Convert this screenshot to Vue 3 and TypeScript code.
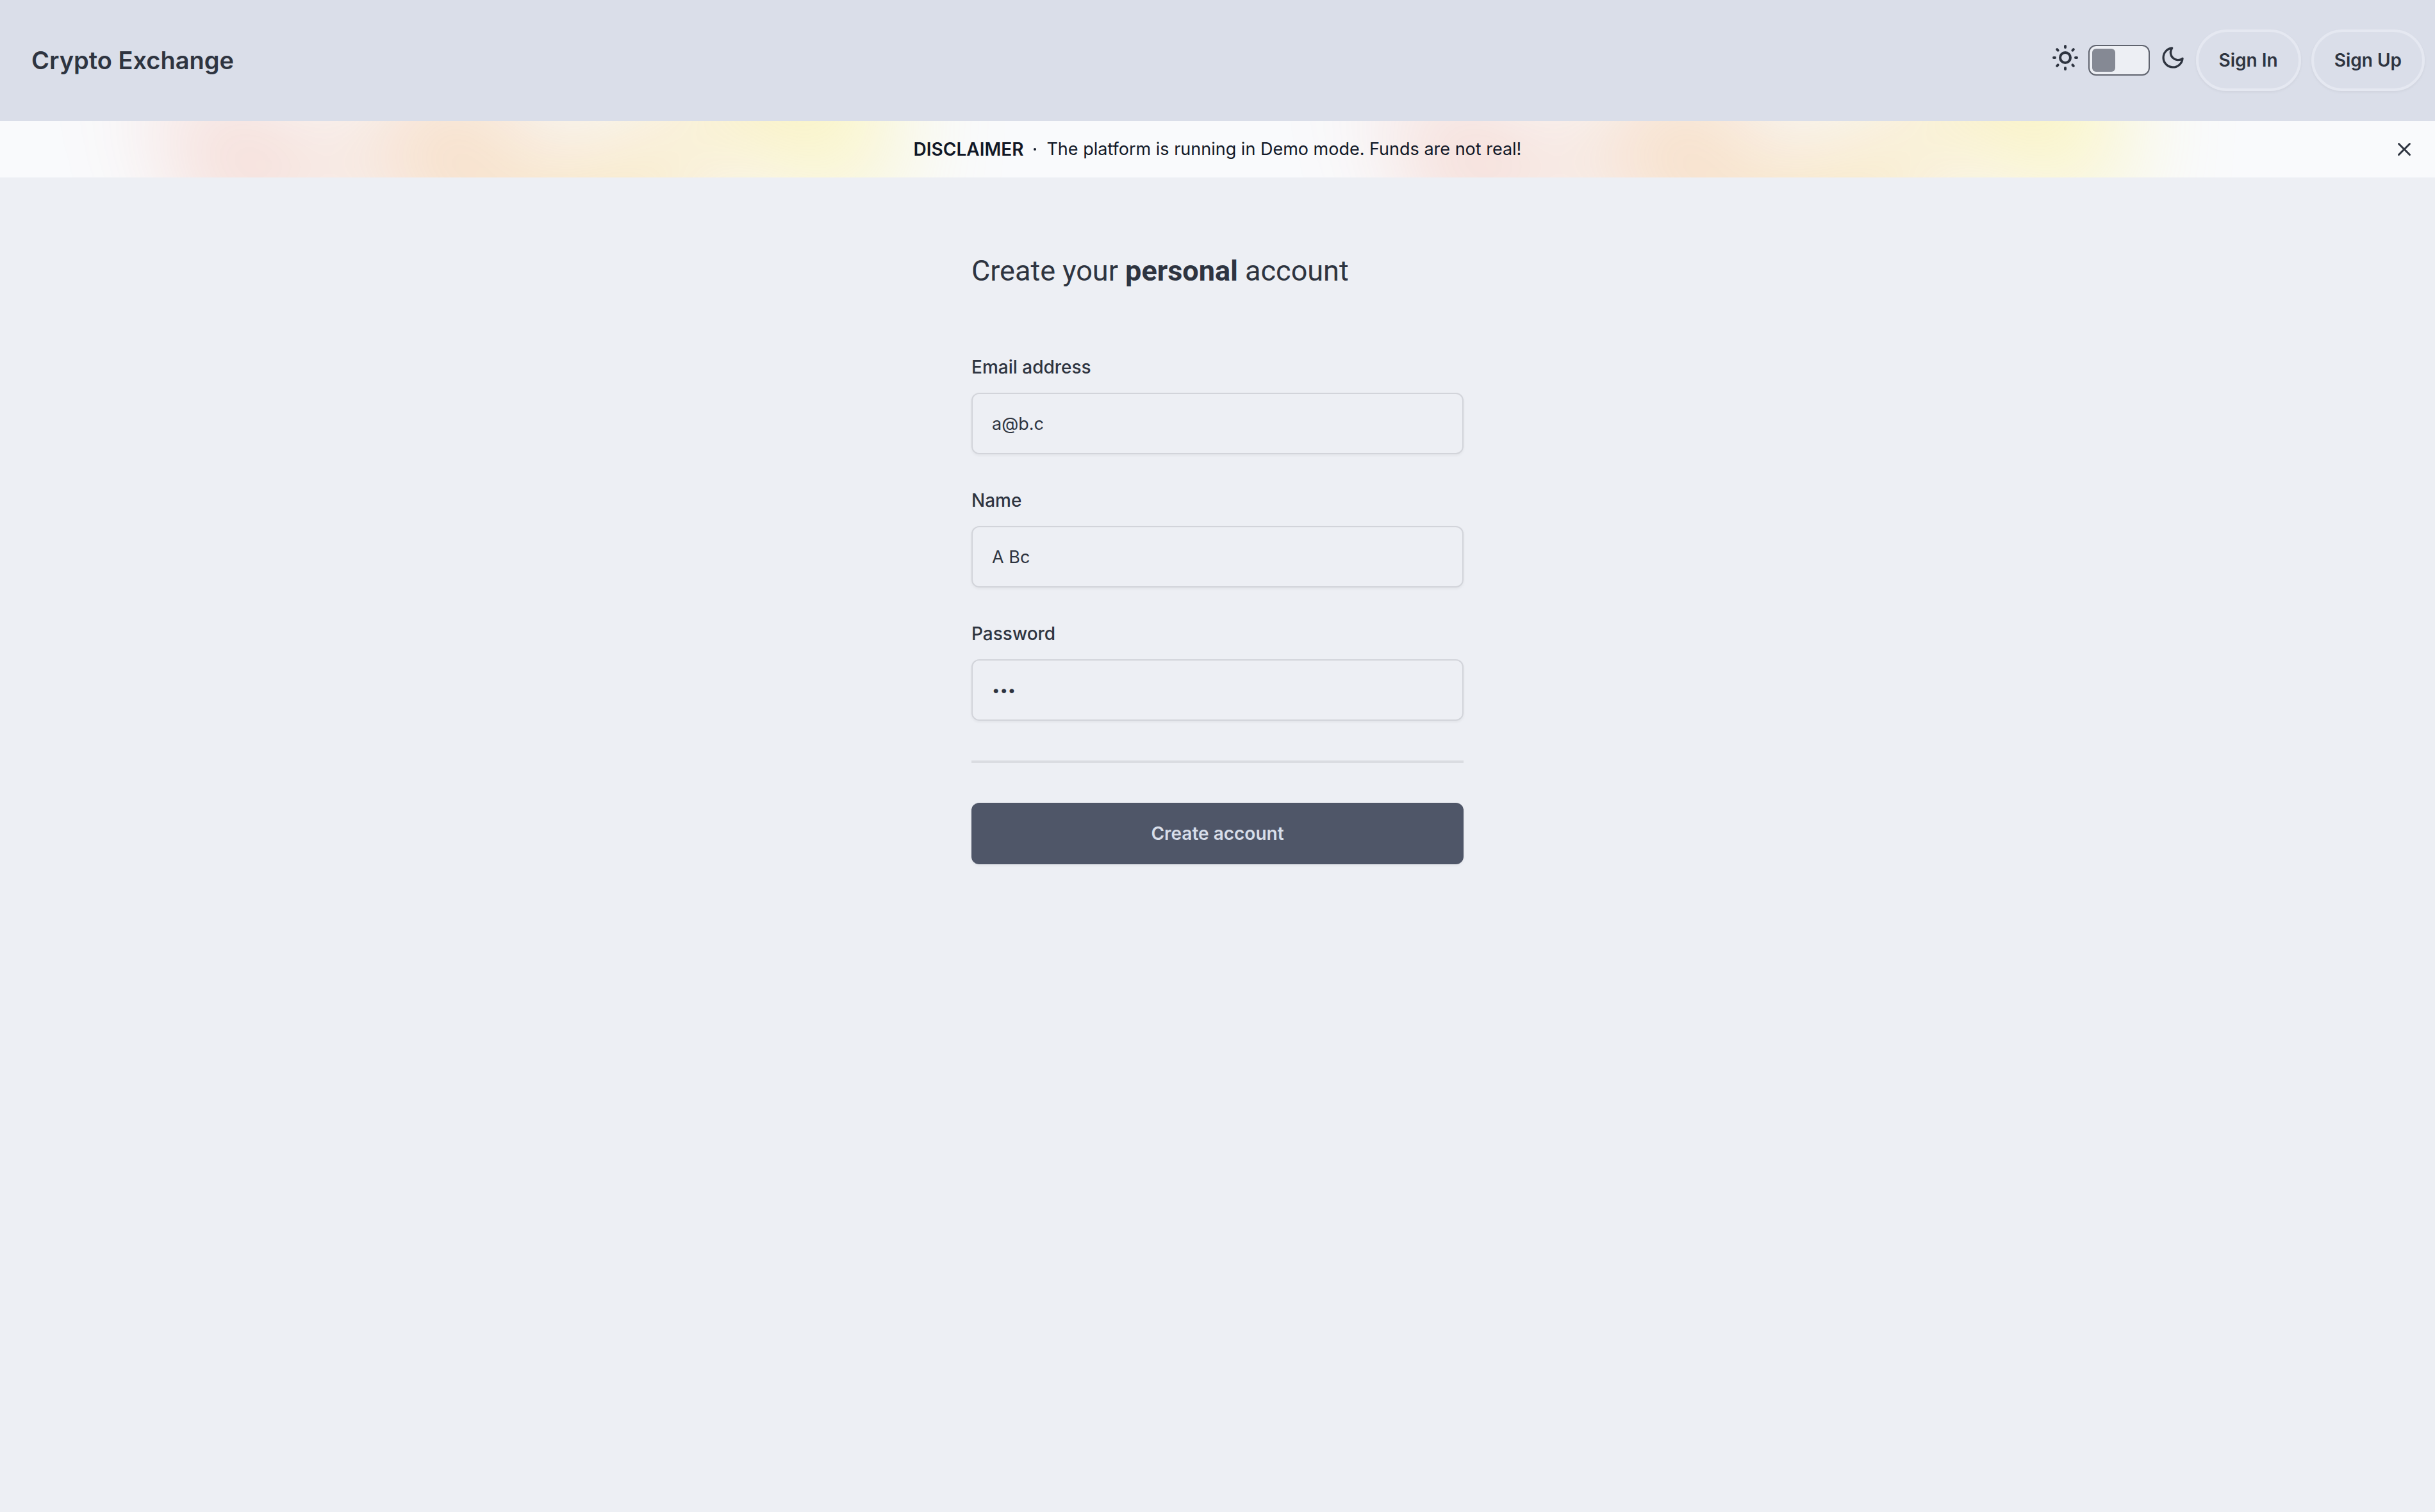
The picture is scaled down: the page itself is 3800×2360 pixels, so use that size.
<script setup lang="ts">
import { reactive, ref } from 'vue'

interface Field {
  id: 'email' | 'name' | 'password'
  label: string
  type: string
  autocomplete: string
}

const fields: Field[] = [
  { id: 'email', label: 'Email address', type: 'email', autocomplete: 'email' },
  { id: 'name', label: 'Name', type: 'text', autocomplete: 'name' },
  { id: 'password', label: 'Password', type: 'password', autocomplete: 'new-password' },
]

const form = reactive({ email: 'a@b.c', name: 'A Bc', password: 'abc' })
const dark = ref(false)
const bannerOpen = ref(true)
</script>

<template>
  <div class="page">
    <header class="navbar">
      <a class="brand" href="#">Crypto Exchange</a>
      <nav class="actions">
        <label class="theme">
          <svg class="sun" viewBox="0 0 24 24" aria-hidden="true">
            <circle cx="12" cy="12" r="4" />
            <path d="M3 12h1M12 3v1M20 12h1M12 20v1M5.6 5.6l.7 .7M18.4 5.6l-.7 .7M17.7 17.7l.7 .7M6.3 17.7l-.7 .7" />
          </svg>
          <input v-model="dark" class="toggle" type="checkbox" aria-label="Dark theme" />
          <svg class="moon" viewBox="0 0 24 24" aria-hidden="true">
            <path d="M21 12.79A9 9 0 1 1 11.21 3 7 7 0 0 0 21 12.79z" />
          </svg>
        </label>
        <button class="pill" type="button">Sign In</button>
        <button class="pill" type="button">Sign Up</button>
      </nav>
    </header>

    <section v-if="bannerOpen" class="banner">
      <div class="glow glow-left" aria-hidden="true"><div class="shape"></div></div>
      <div class="glow glow-right" aria-hidden="true"><div class="shape"></div></div>
      <p class="notice">
        <strong>DISCLAIMER</strong>
        <svg class="dot" viewBox="0 0 2 2" aria-hidden="true"><circle cx="1" cy="1" r="1" /></svg>
        <span>The platform is running in Demo mode. Funds are not real!</span>
      </p>
      <button class="dismiss" type="button" aria-label="Dismiss" @click="bannerOpen = false">
        <svg viewBox="0 0 20 20" aria-hidden="true">
          <path
            d="M6.28 5.22a.75.75 0 00-1.06 1.06L8.94 10l-3.72 3.72a.75.75 0 101.06 1.06L10 11.06l3.72 3.72a.75.75 0 101.06-1.06L11.06 10l3.72-3.72a.75.75 0 00-1.06-1.06L10 8.94 6.28 5.22z"
          />
        </svg>
      </button>
    </section>

    <main class="content">
      <h1>Create your <b>personal</b> account</h1>
      <form class="form" @submit.prevent>
        <div v-for="field in fields" :key="field.id" class="field">
          <label :for="field.id">{{ field.label }}</label>
          <input
            :id="field.id"
            v-model="form[field.id]"
            :type="field.type"
            :autocomplete="field.autocomplete"
          />
        </div>
        <hr />
        <button class="submit" type="submit">Create account</button>
      </form>
    </main>
  </div>
</template>

<style>
body {
  background: #edeff4;
}
</style>

<style scoped>
.page,
.page * {
  box-sizing: border-box;
}

.page {
  min-height: 100vh;
  background: #edeff4;
  color: #2e3440;
  font-family: Inter, 'Liberation Sans', sans-serif;
  font-size: 28px;
  line-height: 40px;
}

button,
input {
  font: inherit;
  color: inherit;
  margin: 0;
}

button {
  cursor: pointer;
}

.navbar {
  display: flex;
  align-items: center;
  justify-content: space-between;
  padding: 46px 16px 47px;
  background: #dadee9;
}

.brand {
  padding: 0 33px;
  color: inherit;
  font-size: 38px;
  font-weight: 600;
  text-decoration: none;
}

.actions {
  display: flex;
  align-items: center;
  gap: 16px;
}

.theme {
  display: flex;
  align-items: center;
}

.theme svg {
  fill: none;
  stroke: currentColor;
  stroke-width: 2;
  stroke-linecap: round;
  stroke-linejoin: round;
}

.sun {
  width: 48px;
  height: 48px;
  margin: 0 12px 8px 0;
}

.moon {
  width: 40px;
  height: 40px;
  margin: 0 0 8px 16px;
}

.toggle {
  appearance: none;
  display: flex;
  width: 96px;
  height: 48px;
  padding: 4px;
  border: 2px solid #5f636e;
  border-radius: 12px;
  background: #edeff4;
  cursor: pointer;
}

.toggle::before {
  content: '';
  width: 36px;
  border-radius: 6px;
  background: #858994;
}

.toggle:checked {
  justify-content: flex-end;
}

.pill {
  height: 96px;
  padding: 0 32px;
  border: 4px solid #e5e8f1;
  border-radius: 48px;
  background: transparent;
  box-shadow: 0 2px 4px rgba(0, 0, 0, 0.05);
  font-weight: 600;
}

.banner {
  position: relative;
  display: flex;
  align-items: center;
  justify-content: center;
  height: 88px;
  overflow: hidden;
  background: #f9fafc;
}

.glow {
  position: absolute;
  top: 50%;
  width: 1154px;
  transform: translateY(-50%);
  filter: blur(88px);
}

.glow-left {
  left: max(-224px, calc(50% - 1664px));
}

.glow-right {
  left: max(1440px, calc(50% + 256px));
}

.shape {
  aspect-ratio: 577 / 310;
  background: linear-gradient(to right, #e8442a, #fff536);
  opacity: 0.3;
  clip-path: polygon(74.8% 41.9%, 97.2% 73.2%, 100% 34.9%, 92.5% 0.4%, 87.5% 0%, 75% 28.6%, 58.5% 54.6%, 50.1% 56.8%, 46.9% 44%, 48.3% 17.4%, 24.7% 53.9%, 0% 27.9%, 11.9% 74.2%, 24.9% 54.1%, 68.6% 100%, 74.8% 41.9%);
}

.notice {
  position: relative;
  display: flex;
  align-items: center;
  margin: 0;
  color: #111827;
}

.notice strong {
  font-weight: 600;
}

.notice span {
  font-size: 27px;
}

.dot {
  width: 4px;
  height: 4px;
  margin: 0 16px;
  fill: currentColor;
}

.dismiss {
  position: absolute;
  right: 4px;
  display: flex;
  padding: 24px;
  border: 0;
  background: none;
}

.dismiss svg {
  width: 40px;
  height: 40px;
  fill: currentColor;
}

.content {
  max-width: 768px;
  margin: 0 auto;
  padding: 110px 0 96px;
}

h1 {
  margin: 0 0 94px;
  font-family: Roboto, Inter, sans-serif;
  font-size: 45px;
  font-weight: 400;
  line-height: 72px;
}

h1 b {
  font-weight: 700;
}

.form {
  display: flex;
  flex-direction: column;
}

.field {
  display: flex;
  flex-direction: column;
  gap: 20px;
}

.field + .field {
  margin-top: 52px;
}

.field label {
  font-weight: 500;
}

.field input {
  width: 100%;
  height: 96px;
  padding: 0 30px;
  border: 2px solid #d2d4da;
  border-radius: 12px;
  outline: 0;
  background: transparent;
  box-shadow: 0 2px 4px rgba(0, 0, 0, 0.05);
  font-size: 27px;
}

.field input[type='password'] {
  font-size: 22px;
}

hr {
  width: 100%;
  height: 4px;
  margin: 62px 0;
  border: 0;
  background: #dadce1;
}

.submit {
  height: 96px;
  border: 0;
  border-radius: 12px;
  background: #4f5668;
  box-shadow: 0 2px 4px rgba(0, 0, 0, 0.05);
  color: #d8dee9;
  font-weight: 600;
}
</style>
